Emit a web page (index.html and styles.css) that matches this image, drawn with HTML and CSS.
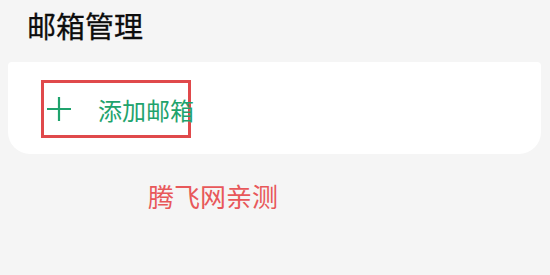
FILE: index.html
```html
<!DOCTYPE html>
<html lang="zh-CN">
<head>
    <meta charset="UTF-8">
    <meta name="viewport" content="width=device-width, initial-scale=1.0">
    <title>邮箱管理</title>
    <link rel="stylesheet" href="styles.css">
</head>
<body>

    <div class="page-title">邮箱管理</div>

    <div class="card">
        <div class="add-mail">
            <svg class="plus" width="24" height="24" viewBox="0 0 24 24">
                <path d="M12 0 V24 M0 12 H24" stroke="#1fa36d" stroke-width="2.2" fill="none"/>
            </svg>
            <span class="add-text">添加邮箱</span>
        </div>
    </div>

    <div class="note">腾飞网亲测</div>

</body>
</html>
```

FILE: styles.css
```css
body {
    margin: 0;
    padding: 0;
    background-color: #f5f5f5;
    font-family: "Noto Sans CJK SC", "Noto Sans", sans-serif;
}

.page-title {
    padding: 6px 0 0 27px;
    height: 56px;
    box-sizing: border-box;
    font-size: 29px;
    line-height: 38px;
    color: #0d0d0d;
    -webkit-text-stroke: 0.3px #0d0d0d;
}

.card {
    margin: 6px 9px 0 8px;
    height: 92px;
    background-color: #ffffff;
    border-radius: 4px 4px 22px 22px;
    padding: 18px 0 0 33px;
    box-sizing: border-box;
}

.add-mail {
    width: 150px;
    height: 58px;
    border: 3px solid #e0494b;
    box-sizing: border-box;
    display: flex;
    align-items: center;
    padding-left: 3px;
    white-space: nowrap;
}

.plus {
    flex-shrink: 0;
}

.add-text {
    margin-left: 27px;
    font-size: 24px;
    color: #1fa36d;
}

.note {
    margin: 24px 0 0 148px;
    font-size: 26px;
    line-height: 36px;
    color: #e8585a;
}
```
